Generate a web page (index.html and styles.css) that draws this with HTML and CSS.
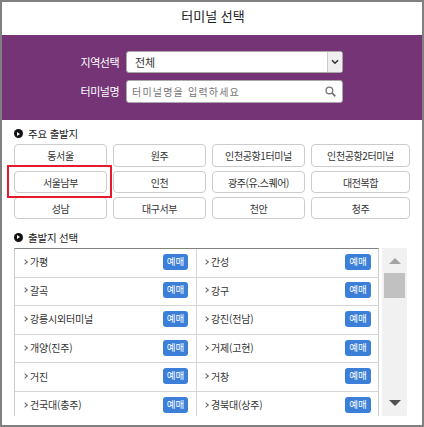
FILE: index.html
```html
<!DOCTYPE html>
<html lang="ko">
  <head>
    <meta charset="UTF-8" />
    <meta name="viewport" content="width=device-width, initial-scale=1.0" />
    <title>터미널 선택</title>
    <link rel="stylesheet" href="styles.css">
  </head>
  <body>
    <div class="popup">
      <h1 class="popup-title">터미널 선택</h1>

      <div class="search-box">
        <div class="search-row">
          <label class="search-label">지역선택</label>
          <div class="select-box">
            <span class="select-value">전체</span>
            <span class="select-arrow">
              <svg width="8" height="6" viewBox="0 0 8 6"><path d="M1 1.2 4 4.2 7 1.2" fill="none" stroke="#333" stroke-width="1.6"/></svg>
            </span>
          </div>
        </div>
        <div class="search-row">
          <label class="search-label">터미널명</label>
          <div class="input-box">
            <span class="input-placeholder">터미널명을 입력하세요</span>
            <svg class="search-icon" width="11" height="11" viewBox="0 0 12 12"><circle cx="4.8" cy="4.8" r="3.6" fill="none" stroke="#777" stroke-width="1.5"/><path d="M7.6 7.6 11.2 11.2" stroke="#777" stroke-width="2"/></svg>
          </div>
        </div>
      </div>

      <div class="content">
        <h2 class="section-title"><span class="bullet"></span>주요 출발지</h2>
        <div class="main-grid">
          <a class="term-btn">동서울</a>
          <a class="term-btn">원주</a>
          <a class="term-btn">인천공항1터미널</a>
          <a class="term-btn">인천공항2터미널</a>
          <a class="term-btn">서울남부</a>
          <a class="term-btn">인천</a>
          <a class="term-btn">광주(유.스퀘어)</a>
          <a class="term-btn">대전복합</a>
          <a class="term-btn">성남</a>
          <a class="term-btn">대구서부</a>
          <a class="term-btn">천안</a>
          <a class="term-btn">청주</a>
          <div class="highlight"></div>
        </div>

        <h2 class="section-title section-title-list"><span class="bullet"></span>출발지 선택</h2>
        <div class="list-wrap">
          <div class="list">
            <div class="list-item"><span class="chevron"></span><span class="list-name">가평</span><span class="badge">예매</span></div>
            <div class="list-item"><span class="chevron"></span><span class="list-name">간성</span><span class="badge">예매</span></div>
            <div class="list-item"><span class="chevron"></span><span class="list-name">갈곡</span><span class="badge">예매</span></div>
            <div class="list-item"><span class="chevron"></span><span class="list-name">강구</span><span class="badge">예매</span></div>
            <div class="list-item"><span class="chevron"></span><span class="list-name">강릉시외터미널</span><span class="badge">예매</span></div>
            <div class="list-item"><span class="chevron"></span><span class="list-name">강진(전남)</span><span class="badge">예매</span></div>
            <div class="list-item"><span class="chevron"></span><span class="list-name">개양(진주)</span><span class="badge">예매</span></div>
            <div class="list-item"><span class="chevron"></span><span class="list-name">거제(고현)</span><span class="badge">예매</span></div>
            <div class="list-item"><span class="chevron"></span><span class="list-name">거진</span><span class="badge">예매</span></div>
            <div class="list-item"><span class="chevron"></span><span class="list-name">거창</span><span class="badge">예매</span></div>
            <div class="list-item"><span class="chevron"></span><span class="list-name">건국대(충주)</span><span class="badge">예매</span></div>
            <div class="list-item"><span class="chevron"></span><span class="list-name">경북대(상주)</span><span class="badge">예매</span></div>
          </div>
          <div class="scrollbar">
            <span class="scroll-up"></span>
            <span class="scroll-thumb"></span>
            <span class="scroll-down"></span>
          </div>
        </div>
      </div>
    </div>
  </body>
</html>
```

FILE: styles.css
```css
* {
  box-sizing: border-box;
  margin: 0;
  padding: 0;
}

html,
body {
  height: 100%;
}

body {
  font-family: "Noto Sans CJK KR", "Noto Sans", sans-serif;
  background: #ffffff;
  color: #333333;
  overflow: hidden;
}

.popup {
  width: 424px;
  height: 427px;
  border: 2px solid #808080;
  background: #ffffff;
}

.popup-title {
  height: 33px;
  line-height: 27px;
  padding-left: 2px;
  text-align: center;
  font-size: 13px;
  font-weight: 400;
  color: #222222;
}

.search-box {
  height: 85px;
  background: #753476;
  padding-top: 16px;
  display: flex;
  flex-direction: column;
  gap: 7px;
}

.search-row {
  display: flex;
  align-items: center;
  height: 22px;
}

.search-label {
  width: 117px;
  text-align: right;
  font-size: 11px;
  letter-spacing: -0.5px;
  color: #ffffff;
  margin-right: 7px;
}

.select-box,
.input-box {
  width: 217px;
  height: 22px;
  display: flex;
  align-items: center;
  background: #ffffff;
  border: 1px solid #a9a9a9;
  border-radius: 3px;
  font-size: 11px;
}

.select-value {
  flex: 1;
  padding-left: 8px;
}

.select-arrow {
  width: 15px;
  height: 100%;
  display: flex;
  align-items: center;
  justify-content: center;
  background: #efefef;
  border-left: 1px solid #cccccc;
}

.input-box {
  height: 23px;
  padding: 0 6px 0 5px;
  justify-content: space-between;
}

.input-placeholder {
  font-size: 10px;
  letter-spacing: 1.2px;
  color: #757575;
}

.content {
  padding: 0 12px;
}

.section-title {
  display: flex;
  align-items: center;
  height: 24px;
  font-size: 10.5px;
  letter-spacing: -0.2px;
  font-weight: 400;
  color: #222222;
  padding-top: 3px;
}

.bullet {
  position: relative;
  width: 9px;
  height: 9px;
  margin-right: 5px;
  border-radius: 50%;
  background: #111111;
}

.bullet::after {
  content: "";
  position: absolute;
  left: 3px;
  top: 2.5px;
  border-left: 3px solid #ffffff;
  border-top: 2px solid transparent;
  border-bottom: 2px solid transparent;
}

.main-grid {
  position: relative;
  display: grid;
  grid-template-columns: 93px 93px 93px 99px;
  grid-template-rows: 23px 22px 22px;
  column-gap: 6px;
  row-gap: 4px;
}

.term-btn {
  display: flex;
  align-items: center;
  justify-content: center;
  border: 1px solid #cccccc;
  border-radius: 4px;
  font-size: 10px;
  letter-spacing: -0.4px;
  color: #333333;
  background: #ffffff;
}

.highlight {
  position: absolute;
  left: -7px;
  top: 21px;
  width: 105px;
  height: 33px;
  border: 2px solid #e8192c;
}

.section-title-list {
  margin-top: 5px;
  height: 24px;
  padding-top: 2px;
}

.list-wrap {
  display: flex;
  gap: 3px;
  height: 168px;
}

.list {
  width: 365px;
  height: 168px;
  overflow: hidden;
  border-top: 1px solid #808080;
  border-left: 1px solid #cccccc;
  border-right: 1px solid #cccccc;
  display: grid;
  grid-template-columns: 182px 181px;
  grid-auto-rows: 28.6px;
}

.list-item {
  display: flex;
  align-items: center;
  padding: 0 7px 2px 7px;
  border-bottom: 1px solid #d5d5d5;
  font-size: 10px;
  letter-spacing: -0.2px;
}

.list-item:nth-child(odd) {
  padding: 0 8px 2px 8px;
  border-right: 1px solid #d5d5d5;
}

.chevron {
  width: 4px;
  height: 4px;
  margin-right: 3px;
  border-top: 1.5px solid #666666;
  border-right: 1.5px solid #666666;
  transform: rotate(45deg);
}

.list-name {
  flex: 1;
}

.badge {
  width: 25px;
  height: 16px;
  line-height: 15px;
  text-align: center;
  border-radius: 3px;
  background: #3b7fd9;
  color: #ffffff;
  font-size: 9.5px;
  letter-spacing: 0;
}

.list-item:nth-child(even) .badge {
  width: 26px;
}

.scrollbar {
  position: relative;
  width: 25px;
  height: 168px;
  background: #f1f1f1;
}

.scroll-up {
  position: absolute;
  left: 7px;
  top: 10px;
  border-left: 6px solid transparent;
  border-right: 6px solid transparent;
  border-bottom: 6px solid #a3a3a3;
}

.scroll-thumb {
  position: absolute;
  left: 2px;
  top: 25px;
  width: 21px;
  height: 25px;
  background: #c1c1c1;
}

.scroll-down {
  position: absolute;
  left: 7px;
  bottom: 10px;
  border-left: 6px solid transparent;
  border-right: 6px solid transparent;
  border-top: 6px solid #505050;
}
```
